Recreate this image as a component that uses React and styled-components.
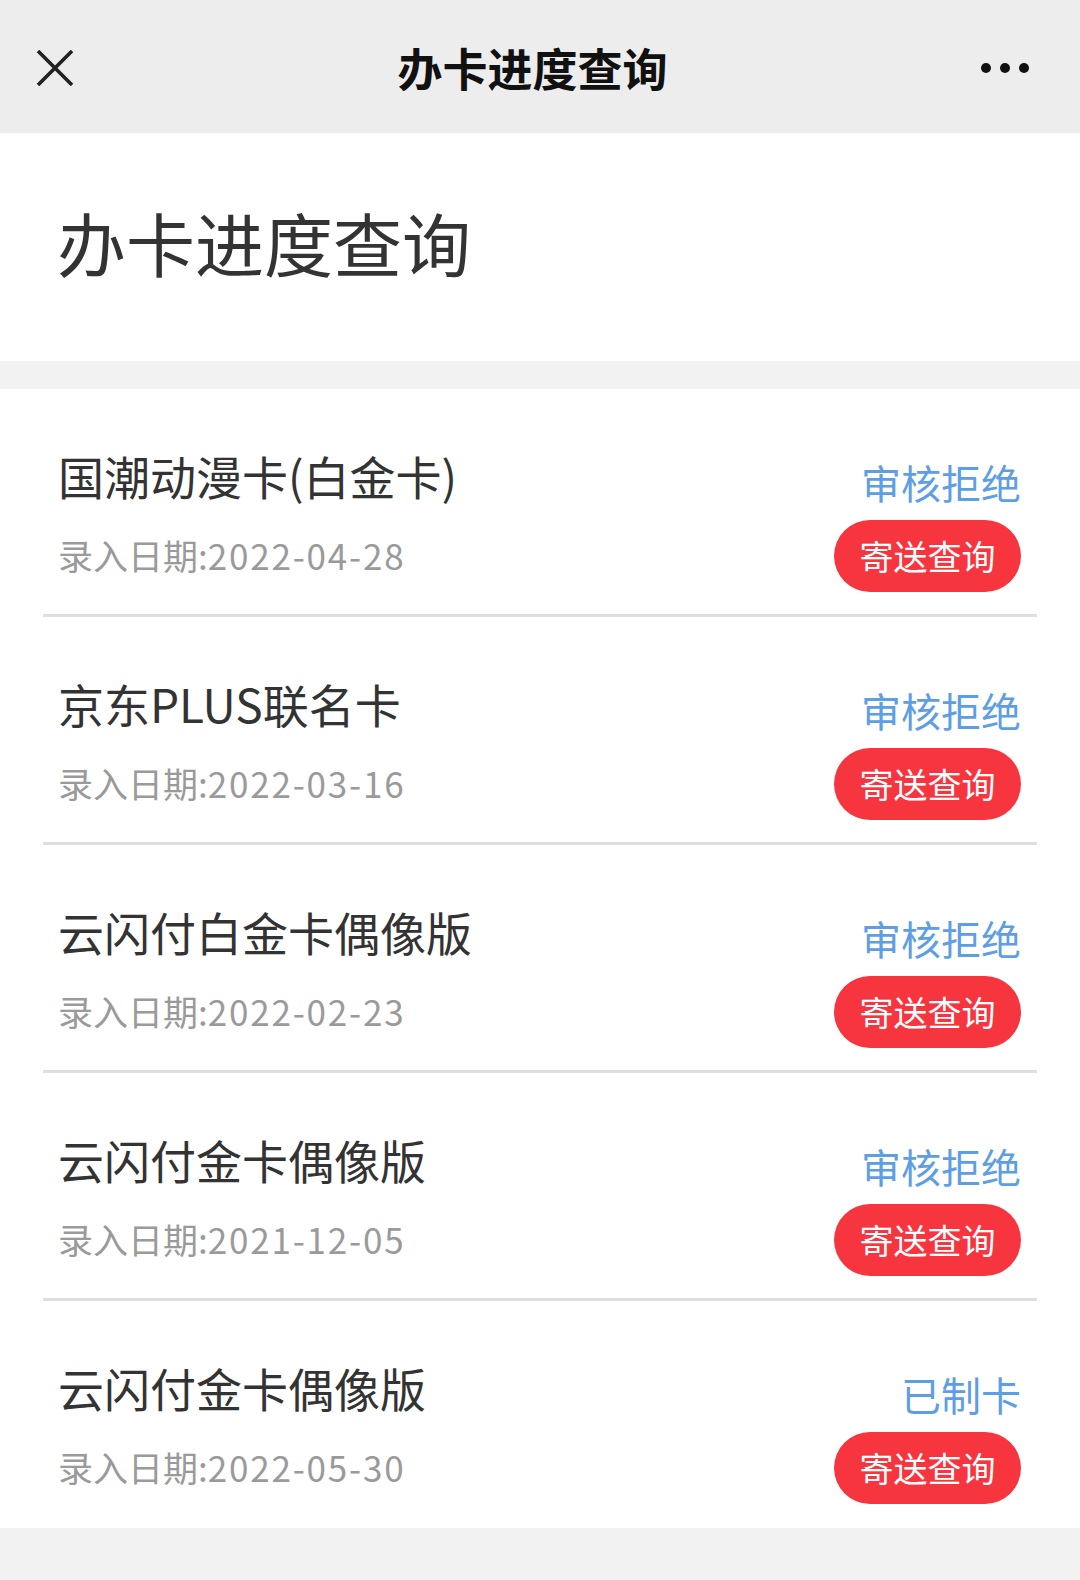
import React from "react";
import styled, { createGlobalStyle } from "styled-components";

const GlobalStyle = createGlobalStyle`
  html, body { margin: 0; padding: 0; background: #f2f2f2; }
  body { font-family: "Noto Sans CJK SC", "Noto Sans", sans-serif; }
  * { box-sizing: border-box; }
`;

const Page = styled.div`
  width: 1080px;
  min-height: 1580px;
  background: #f2f2f2;
`;

const NavBar = styled.header`
  height: 133px;
  background: #ededed;
  display: grid;
  grid-template-columns: 200px 1fr 200px;
  align-items: center;
`;

const NavLeft = styled.div`
  display: flex;
  align-items: center;
  padding-left: 36px;
  padding-top: 2px;
`;

const NavTitle = styled.h1`
  margin: 0;
  text-align: center;
  font-size: 45px;
  font-weight: 700;
  color: #111;
  line-height: 1;
  padding-top: 2px;
  padding-right: 15px;
`;

const NavRight = styled.div`
  display: flex;
  justify-content: flex-end;
  align-items: center;
  gap: 9px;
  padding-right: 51px;
  padding-top: 2px;
`;

const Dot = styled.span`
  width: 10px;
  height: 10px;
  border-radius: 50%;
  background: #111;
`;

const Hero = styled.section`
  height: 228px;
  background: #fff;
  display: flex;
  align-items: center;
  padding-left: 57px;
  padding-bottom: 10px;
`;

const HeroTitle = styled.h2`
  margin: 0;
  font-size: 69px;
  font-weight: 400;
  color: #333;
  line-height: 1;
`;

const List = styled.ul`
  list-style: none;
  margin: 28px 0 0;
  padding: 0;
  background: #fff;
`;

const Item = styled.li`
  margin: 0 43px;
  padding: 58px 16px 22px 15px;
  border-bottom: ${(p) => (p.$last ? "none" : "3px solid #dedede")};
  padding-bottom: ${(p) => (p.$last ? "24px" : "22px")};
`;

const TopLine = styled.div`
  display: flex;
  justify-content: space-between;
  align-items: center;
  height: 56px;
`;

const CardName = styled.span`
  font-size: 46px;
  color: #333;
  line-height: 56px;
`;

const Status = styled.span`
  font-size: 40px;
  color: #5e9ee4;
  line-height: 56px;
  margin-top: 14px;
`;

const BottomLine = styled.div`
  display: flex;
  justify-content: space-between;
  align-items: center;
  margin-top: 17px;
`;

const DateText = styled.span`
  font-size: 35px;
  color: #9a9a9a;
  line-height: 40px;
  margin-top: -3px;
`;

const DateValue = styled.span`
  letter-spacing: 1.8px;
`;

const SendButton = styled.button`
  width: 187px;
  height: 72px;
  border: none;
  border-radius: 36px;
  background: #f6353f;
  color: #fff;
  font-family: inherit;
  font-size: 34px;
  line-height: 1;
  padding: 0;
  display: flex;
  align-items: center;
  justify-content: center;
`;

const CloseIcon = () => (
  <svg width="38" height="36" viewBox="0 0 38 36">
    <path d="M2 1 L36 35 M36 1 L2 35" stroke="#222" strokeWidth="3.6" fill="none" />
  </svg>
);

const items = [
  { name: "国潮动漫卡(白金卡)", date: "2022-04-28", status: "审核拒绝" },
  { name: "京东PLUS联名卡", date: "2022-03-16", status: "审核拒绝" },
  { name: "云闪付白金卡偶像版", date: "2022-02-23", status: "审核拒绝" },
  { name: "云闪付金卡偶像版", date: "2021-12-05", status: "审核拒绝" },
  { name: "云闪付金卡偶像版", date: "2022-05-30", status: "已制卡" },
];

export default function App() {
  return (
    <Page>
      <GlobalStyle />
      <NavBar>
        <NavLeft>
          <CloseIcon />
        </NavLeft>
        <NavTitle>办卡进度查询</NavTitle>
        <NavRight>
          <Dot />
          <Dot />
          <Dot />
        </NavRight>
      </NavBar>
      <Hero>
        <HeroTitle>办卡进度查询</HeroTitle>
      </Hero>
      <List>
        {items.map((it, i) => (
          <Item key={i} $last={i === items.length - 1}>
            <TopLine>
              <CardName>{it.name}</CardName>
              <Status>{it.status}</Status>
            </TopLine>
            <BottomLine>
              <DateText>
                录入日期:<DateValue>{it.date}</DateValue>
              </DateText>
              <SendButton>寄送查询</SendButton>
            </BottomLine>
          </Item>
        ))}
      </List>
    </Page>
  );
}
